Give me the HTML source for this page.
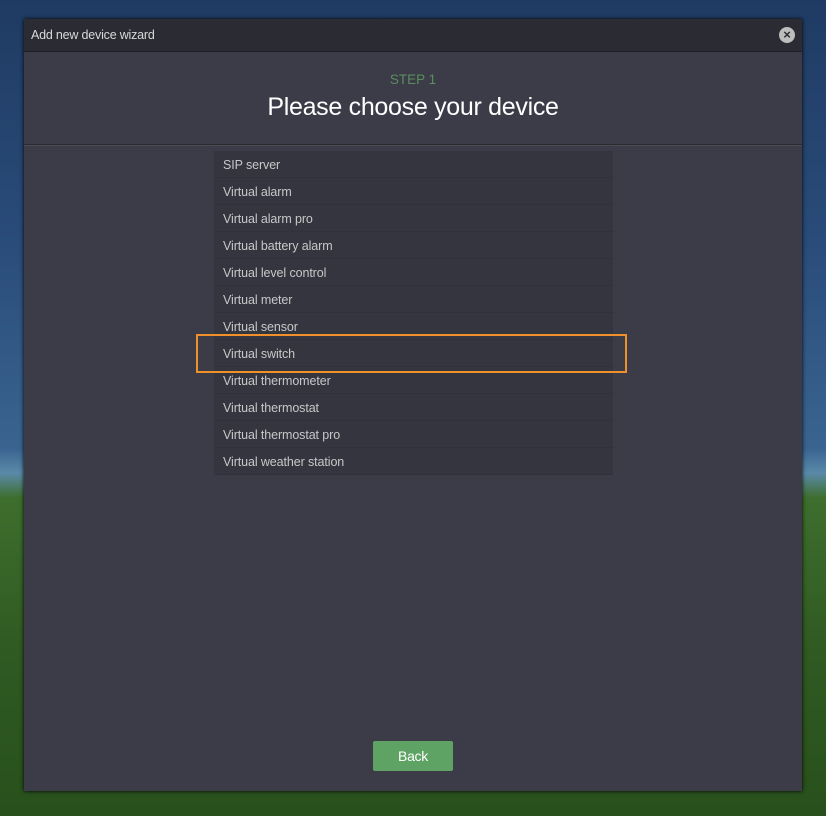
<!DOCTYPE html>
<html><head><style>
body{margin:0;width:826px;height:816px;overflow:hidden;font-family:"Liberation Sans",sans-serif;
background:linear-gradient(#1f3b63 0%,#2a4c7a 30%,#3a6490 55%,#5a8aa8 58%,#3e6e2e 61%,#2f5a22 80%,#28501c 100%);position:relative}
.dlg{position:absolute;left:24px;top:19px;width:778px;height:772px;background:#3b3c47;box-shadow:0 0 4px #000;}
.hd{height:32px;background:#2b2c33;border-bottom:1px solid #1e1f24;color:#d8d8d8;font-size:12.5px;line-height:33px;padding-left:7px;position:relative;letter-spacing:-0.2px}
.x{position:absolute;right:7px;top:8px;width:16px;height:16px;border-radius:50%;background:#bdbdbd;color:#2b2c33;font-size:13px;line-height:16px;text-align:center;font-weight:bold}
.step{position:absolute;top:53px;width:100%;text-align:center;color:#5a8e5e;font-size:13.5px}
.title{position:absolute;top:74px;width:100%;text-align:center;color:#fff;font-size:25px;letter-spacing:-0.3px}
.sep{position:absolute;top:125px;left:0;width:100%;height:1px;background:#2a2b31;border-bottom:1px solid #4a4b55}
.list{position:absolute;left:190px;top:132px;width:399px}
.it{height:26px;border-bottom:1px solid #30313a;background:#34353f;color:#c8c8c8;font-size:12.5px;line-height:28px;padding-left:9px;letter-spacing:-0.1px}
.hl{position:absolute;left:172px;top:315px;width:427px;height:35px;border:2px solid #f0902a}
.btn{position:absolute;left:349px;top:722px;width:80px;height:30px;background:#5ea363;border-radius:2px;color:#fff;font-size:14px;text-align:center;line-height:30px;letter-spacing:-0.3px}
</style></head><body>
<div class="dlg">
<div class="hd">Add new device wizard<div class="x">×</div></div>
<div class="step">STEP 1</div>
<div class="title">Please choose your device</div>
<div class="sep"></div>
<div class="list">
<div class="it">SIP server</div>
<div class="it">Virtual alarm</div>
<div class="it">Virtual alarm pro</div>
<div class="it">Virtual battery alarm</div>
<div class="it">Virtual level control</div>
<div class="it">Virtual meter</div>
<div class="it">Virtual sensor</div>
<div class="it">Virtual switch</div>
<div class="it">Virtual thermometer</div>
<div class="it">Virtual thermostat</div>
<div class="it">Virtual thermostat pro</div>
<div class="it">Virtual weather station</div>
</div>
<div class="hl"></div>
<div class="btn">Back</div>
</div>
</body></html>
